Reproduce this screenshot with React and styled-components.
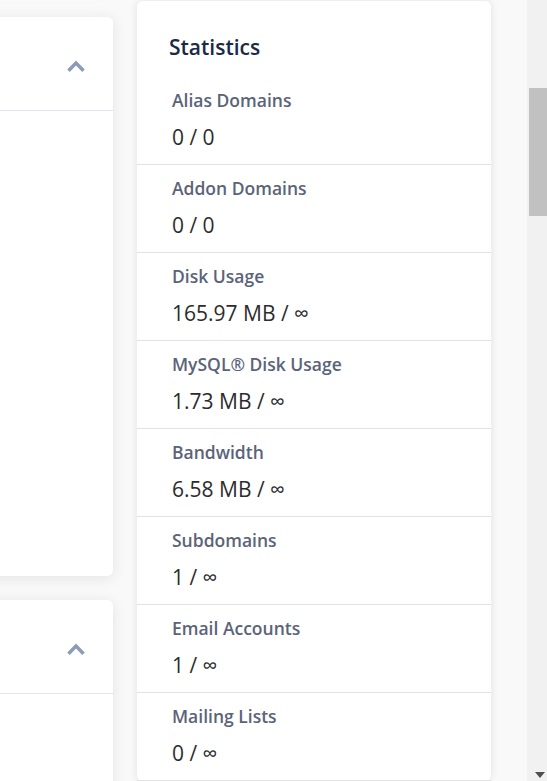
import React from "react";
import styled, { createGlobalStyle } from "styled-components";

const GlobalStyle = createGlobalStyle`
  html, body {
    margin: 0;
    padding: 0;
    height: 100%;
    overflow: hidden;
    background: #f9f9f9;
    font-family: "Open Sans", "Noto Sans", "Liberation Sans", sans-serif;
  }
  * { box-sizing: border-box; }
`;

const Page = styled.div`
  display: flex;
  height: 781px;
  width: 547px;
  overflow: hidden;
  background: #f9f9f9;
`;

const Content = styled.div`
  flex: 1;
  display: flex;
  align-items: flex-start;
  gap: 24px;
  min-width: 0;
`;

const SideColumn = styled.div`
  width: 113px;
  flex: none;
  display: flex;
  flex-direction: column;
  gap: 24px;
  padding-top: 17px;
`;

const Panel = styled.section`
  margin-left: -240px;
  background: #ffffff;
  border-radius: 6px;
  box-shadow: 0 2px 14px rgba(30, 40, 60, 0.1);
  height: ${(p) => p.$height}px;
`;

const PanelHeader = styled.header`
  height: 94px;
  display: flex;
  align-items: center;
  justify-content: flex-end;
  padding: 4px 28px 0 0;
  border-bottom: 1px solid #e4e4ee;
`;

const Chevron = styled.svg`
  width: 18px;
  height: 12px;
  display: block;
`;

const StatsCard = styled.section`
  width: 354px;
  flex: none;
  margin-top: 1px;
  background: #ffffff;
  border-radius: 6px;
  box-shadow: 0 0 8px rgba(0, 0, 0, 0.1);
`;

const StatsTitle = styled.h2`
  margin: 0;
  padding: 32px 32px 16px;
  font-size: 21px;
  line-height: 28px;
  font-weight: 600;
  color: #1b2a46;
`;

const StatRow = styled.div`
  padding: 11px 35px 12px;
  border-bottom: 1px solid #e2e2e2;
  display: flex;
  flex-direction: column;
  gap: 10px;
`;

const StatLabel = styled.div`
  font-size: 17.5px;
  line-height: 24px;
  font-weight: 600;
  color: #5b6379;
`;

const StatValue = styled.div`
  font-size: 21px;
  line-height: 30px;
  font-weight: 400;
  color: #2c2c2c;
`;

const Scrollbar = styled.div`
  width: 20px;
  flex: none;
  background: #f1f1f1;
  display: flex;
  flex-direction: column;
  align-items: flex-end;
`;

const Thumb = styled.div`
  width: 18px;
  height: 128px;
  margin-top: 88px;
  background: #c1c1c1;
`;

const ArrowDown = styled.div`
  margin-top: auto;
  margin-bottom: 3px;
  margin-right: 2px;
  width: 0;
  height: 0;
  border-left: 5.5px solid transparent;
  border-right: 5.5px solid transparent;
  border-top: 6px solid #505050;
`;

const stats = [
  { label: "Alias Domains", value: "0 / 0" },
  { label: "Addon Domains", value: "0 / 0" },
  { label: "Disk Usage", value: "165.97 MB / ∞" },
  { label: "MySQL® Disk Usage", value: "1.73 MB / ∞" },
  { label: "Bandwidth", value: "6.58 MB / ∞" },
  { label: "Subdomains", value: "1 / ∞" },
  { label: "Email Accounts", value: "1 / ∞" },
  { label: "Mailing Lists", value: "0 / ∞" },
];

function CollapseIcon() {
  return (
    <Chevron viewBox="0 0 18 12" fill="none">
      <polyline
        points="1.5,10.8 9,3 16.5,10.8"
        stroke="#8c9bb6"
        strokeWidth="3.4"
        strokeLinecap="butt"
        strokeLinejoin="miter"
      />
    </Chevron>
  );
}

export default function App() {
  return (
    <>
      <GlobalStyle />
      <Page>
        <Content>
          <SideColumn>
            <Panel $height={559}>
              <PanelHeader>
                <CollapseIcon />
              </PanelHeader>
            </Panel>
            <Panel $height={400}>
              <PanelHeader>
                <CollapseIcon />
              </PanelHeader>
            </Panel>
          </SideColumn>
          <StatsCard>
            <StatsTitle>Statistics</StatsTitle>
            {stats.map((s) => (
              <StatRow key={s.label}>
                <StatLabel>{s.label}</StatLabel>
                <StatValue>{s.value}</StatValue>
              </StatRow>
            ))}
          </StatsCard>
        </Content>
        <Scrollbar>
          <Thumb />
          <ArrowDown />
        </Scrollbar>
      </Page>
    </>
  );
}
